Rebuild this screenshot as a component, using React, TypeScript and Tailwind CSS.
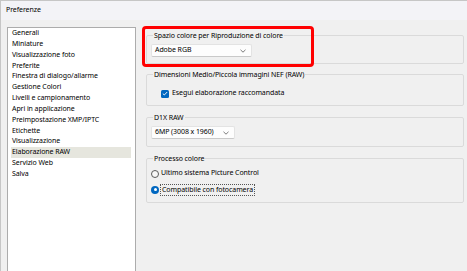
import React from 'react';

const categories = [
  'Generali',
  'Miniature',
  'Visualizzazione foto',
  'Preferite',
  'Finestra di dialogo/allarme',
  'Gestione Colori',
  'Livelli e campionamento',
  'Apri in applicazione',
  'Preimpostazione XMP/IPTC',
  'Etichette',
  'Visualizzazione',
  'Elaborazione RAW',
  'Servizio Web',
  'Salva',
];

function Chevron() {
  return (
    <svg width="6" height="4" viewBox="0 0 6 4" className="shrink-0">
      <path d="M0.5 0.8 L3 3.2 L5.5 0.8" fill="none" stroke="#6b6b6b" strokeWidth="0.9" />
    </svg>
  );
}

function Dropdown({ value, width }: { value: string; width: string }) {
  return (
    <div
      className={`${width} h-[13px] flex items-center justify-between pl-[3px] pr-[5px] bg-[#fdfdfd] border border-[#e3e3e3] border-b-[#c9c9c9] rounded-[2px]`}
    >
      <span>{value}</span>
      <Chevron />
    </div>
  );
}

function GroupBox({ title, className, children }: { title: string; className?: string; children: React.ReactNode }) {
  return (
    <fieldset className={`border border-[#dadada] rounded-[2px] px-[4px] ${className ?? ''}`}>
      <legend className="ml-[2px] px-[1px] leading-[11px]">{title}</legend>
      {children}
    </fieldset>
  );
}

export default function App() {
  return (
    <div
      className="relative w-[467px] h-[271px] overflow-hidden bg-[#f0f0f0] text-black text-[7px] tracking-[-0.08px] border-t border-l border-[#c6c6c6]"
      style={{ fontFamily: '"Noto Sans", "Open Sans", sans-serif' }}
    >
      {/* Title */}
      <div className="h-[19px] bg-[#f3f3f7] pl-[5px] flex items-center text-[7px]">Preferenze</div>

      <div className="flex pt-[7px] pl-[6px]">
        {/* Category list */}
        <div className="w-[129px] h-[260px] bg-white border border-b-0 border-[#acacac]">
          <ul className="pl-[3px] pr-[4px]">
            {categories.map((c) => (
              <li
                key={c}
                className={`h-[10.85px] leading-[10.85px] pl-[1px] whitespace-nowrap ${
                  c === 'Elaborazione RAW' ? 'bg-[#e6e6de]' : ''
                }`}
              >
                {c}
              </li>
            ))}
          </ul>
        </div>

        {/* Settings */}
        <div className="ml-[10px] w-[318px] pt-[3px]">
          <GroupBox title="Spazio colore per Riproduzione di colore" className="pt-[3px] pb-[6px]">
            <Dropdown value="Adobe RGB" width="w-[101px]" />
          </GroupBox>

          <GroupBox title="Dimensioni Medio/Piccola immagini NEF (RAW)" className="mt-[5px] pt-[8px] pb-[6px]">
            <div className="flex items-center h-[11px] pl-[10px] gap-[3px]">
              <span className="w-[8px] h-[8px] rounded-[1.5px] bg-[#0067c0] flex items-center justify-center">
                <svg width="6" height="5" viewBox="0 0 6 5">
                  <path d="M0.8 2.6 L2.3 4 L5.2 1" fill="none" stroke="white" strokeWidth="0.9" />
                </svg>
              </span>
              <span>Esegui elaborazione raccomandata</span>
            </div>
          </GroupBox>

          <GroupBox title="D1X RAW" className="mt-[6px] pt-[3px] pb-[7px]">
            <Dropdown value="6MP (3008 x 1960)" width="w-[84px]" />
          </GroupBox>

          <GroupBox title="Processo colore" className="mt-[6px] pt-[4px] pb-[7px]">
            <div className="flex items-center h-[11px] gap-[2px]">
              <span className="w-[8px] h-[8px] rounded-full border border-[#5a5a5a] bg-[#f7f7f7]" />
              <span>Ultimo sistema Picture Control</span>
            </div>
            <div className="flex items-center h-[11px] gap-[1px] mt-[5px]">
              <span className="w-[8px] h-[8px] rounded-full bg-[#0067c0] flex items-center justify-center">
                <span className="w-[3px] h-[3px] rounded-full bg-white" />
              </span>
              <span className="border border-dotted border-[#555] px-[1px] leading-[10px]">Compatibile con fotocamera</span>
            </div>
          </GroupBox>
        </div>
      </div>

      {/* Highlight annotation */}
      <div className="absolute left-[141px] top-[25px] w-[172px] h-[41px] border-[3px] border-[#ff0000] rounded-[4px]" />
    </div>
  );
}
